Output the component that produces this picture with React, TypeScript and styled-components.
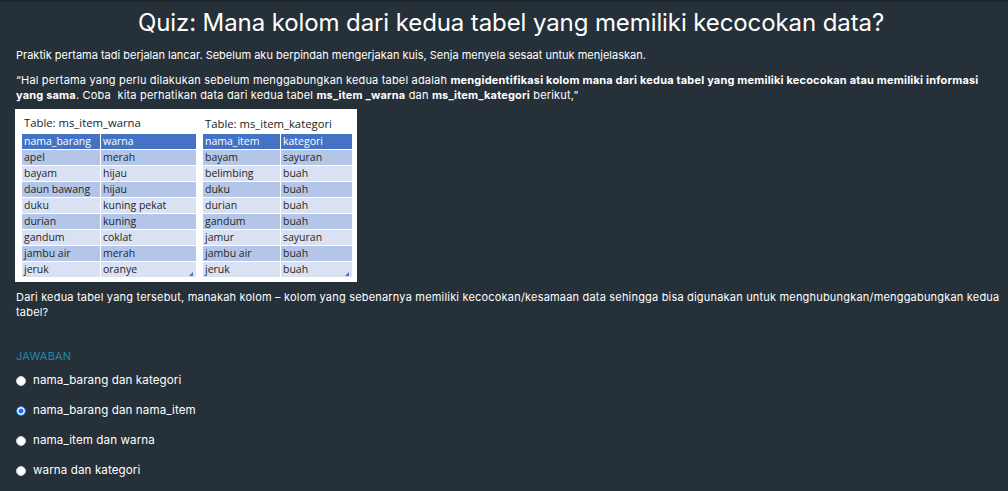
import React from "react";
import styled, { createGlobalStyle } from "styled-components";

const Global = createGlobalStyle`
  html, body { margin: 0; padding: 0; background: #263038; }
  body { font-family: "Inter", "Open Sans", sans-serif; color: #ffffff; }
`;

const Page = styled.div`
  border-top: 2px solid #1e262c;
  padding: 0 2px 0 16px;
  min-height: 489px;
  box-sizing: border-box;
`;

const Title = styled.h1`
  margin: 6px 0 0;
  text-align: center;
  font-size: 24px;
  line-height: 30px;
  font-weight: 400;
  letter-spacing: -0.1px;
`;

const Para = styled.p<{ $top: number; $ls?: number }>`
  margin: ${(p) => p.$top}px 0 0;
  font-size: 11px;
  line-height: 15px;
  font-weight: 400;
  letter-spacing: ${(p) => p.$ls ?? 0}px;
  b { font-weight: 700; }
`;

const Sheet = styled.div`
  margin-top: 6px;
  width: 342px;
  height: 173px;
  margin-left: -1px;
  background: #ffffff;
  display: flex;
  gap: 7px;
  padding: 0 0 0 7px;
  box-sizing: border-box;
  font-family: "Open Sans", "Liberation Sans", sans-serif;
  color: #262626;
`;

const TableBlock = styled.div<{ $w: number }>`
  width: ${(p) => p.$w}px;
  display: flex;
  flex-direction: column;
  position: relative;
`;

const Caption = styled.div<{ $pt: number }>`
  height: 25px;
  padding-top: ${(p) => p.$pt}px;
  padding-left: 2px;
  box-sizing: border-box;
  font-size: 11.3px;
  line-height: 14px;
  color: #222;
`;

const Grid = styled.div<{ $cols: string }>`
  display: grid;
  grid-template-columns: ${(p) => p.$cols};
  column-gap: 1px;
`;

const Cell = styled.div<{ $kind: "head" | "odd" | "even" }>`
  height: 15px;
  margin-bottom: 1px;
  padding-left: 2px;
  font-size: 10.5px;
  line-height: 15px;
  white-space: nowrap;
  background: ${(p) =>
    p.$kind === "head" ? "#4472c4" : p.$kind === "odd" ? "#b4c6e7" : "#d9e1f2"};
  color: ${(p) => (p.$kind === "head" ? "#ffffff" : "#262626")};
`;

const Corner = styled.svg`
  position: absolute;
  right: 3px;
  bottom: 6px;
`;

const Label = styled.div`
  margin-top: 29px;
  font-size: 11px;
  line-height: 15px;
  color: #1d8aa6;
  letter-spacing: 0.2px;
`;

const Options = styled.div`
  margin-top: 9px;
  display: flex;
  flex-direction: column;
  gap: 15px;
`;

const Option = styled.label`
  display: flex;
  align-items: center;
  gap: 7px;
  height: 15px;
  font-size: 11.6px;
  line-height: 15px;
  letter-spacing: 0.1px;
`;

const Radio = styled.span<{ $checked?: boolean }>`
  width: 10px;
  height: 10px;
  border-radius: 50%;
  box-sizing: border-box;
  flex: none;
  background: ${(p) => (p.$checked ? "#1a73e8" : "#ffffff")};
  border: ${(p) => (p.$checked ? "1.5px solid #1a73e8" : "1px solid #d0d0d0")};
  box-shadow: ${(p) => (p.$checked ? "inset 0 0 0 1.5px #ffffff" : "none")};
`;

type Row = [string, string];

const warna: Row[] = [
  ["apel", "merah"],
  ["bayam", "hijau"],
  ["daun bawang", "hijau"],
  ["duku", "kuning pekat"],
  ["durian", "kuning"],
  ["gandum", "coklat"],
  ["jambu air", "merah"],
  ["jeruk", "oranye"],
];

const kategori: Row[] = [
  ["bayam", "sayuran"],
  ["belimbing", "buah"],
  ["duku", "buah"],
  ["durian", "buah"],
  ["gandum", "buah"],
  ["jamur", "sayuran"],
  ["jambu air", "buah"],
  ["jeruk", "buah"],
];

function DataTable({
  caption,
  head,
  rows,
  cols,
  w,
  pt,
}: {
  caption: string;
  head: Row;
  rows: Row[];
  cols: string;
  w: number;
  pt: number;
}) {
  return (
    <TableBlock $w={w}>
      <Caption $pt={pt}>{caption}</Caption>
      <Grid $cols={cols}>
        <Cell $kind="head">{head[0]}</Cell>
        <Cell $kind="head">{head[1]}</Cell>
        {rows.map((r, i) => (
          <React.Fragment key={i}>
            <Cell $kind={i % 2 === 0 ? "odd" : "even"}>{r[0]}</Cell>
            <Cell $kind={i % 2 === 0 ? "odd" : "even"}>{r[1]}</Cell>
          </React.Fragment>
        ))}
      </Grid>
      <Corner width="4" height="4" viewBox="0 0 4 4">
        <path d="M4 0 L4 4 L0 4 Z" fill="#4472c4" />
      </Corner>
    </TableBlock>
  );
}

const answers = [
  "nama_barang dan kategori",
  "nama_barang dan nama_item",
  "nama_item dan warna",
  "warna dan kategori",
];

export default function App() {
  return (
    <>
      <Global />
      <Page>
        <Title>Quiz: Mana kolom dari kedua tabel yang memiliki kecocokan data?</Title>
        <Para $top={10}>
          Praktik pertama tadi berjalan lancar. Sebelum aku berpindah mengerjakan kuis, Senja
          menyela sesaat untuk menjelaskan.
        </Para>
        <Para $top={10} $ls={0.18}>
          “Hal pertama yang perlu dilakukan sebelum menggabungkan kedua tabel adalah{" "}
          <b>
            mengidentifikasi kolom mana dari kedua tabel yang memiliki kecocokan atau memiliki
            informasi yang sama
          </b>
          . Coba&nbsp; kita perhatikan data dari kedua tabel <b>ms_item _warna</b> dan{" "}
          <b>ms_item_kategori</b> berikut,”
        </Para>
        <Sheet>
          <DataTable
            caption="Table: ms_item_warna"
            head={["nama_barang", "warna"]}
            rows={warna}
            cols="78px 95px"
            w={174}
            pt={7}
          />
          <DataTable
            caption="Table: ms_item_kategori"
            head={["nama_item", "kategori"]}
            rows={kategori}
            cols="77px 71px"
            w={149}
            pt={8}
          />
        </Sheet>
        <Para $top={8} $ls={0.19}>
          Dari kedua tabel yang tersebut, manakah kolom – kolom yang sebenarnya memiliki
          kecocokan/kesamaan data sehingga bisa digunakan untuk menghubungkan/menggabungkan kedua
          tabel?
        </Para>
        <Label>JAWABAN</Label>
        <Options>
          {answers.map((a, i) => (
            <Option key={a}>
              <Radio $checked={i === 1} />
              {a}
            </Option>
          ))}
        </Options>
      </Page>
    </>
  );
}
